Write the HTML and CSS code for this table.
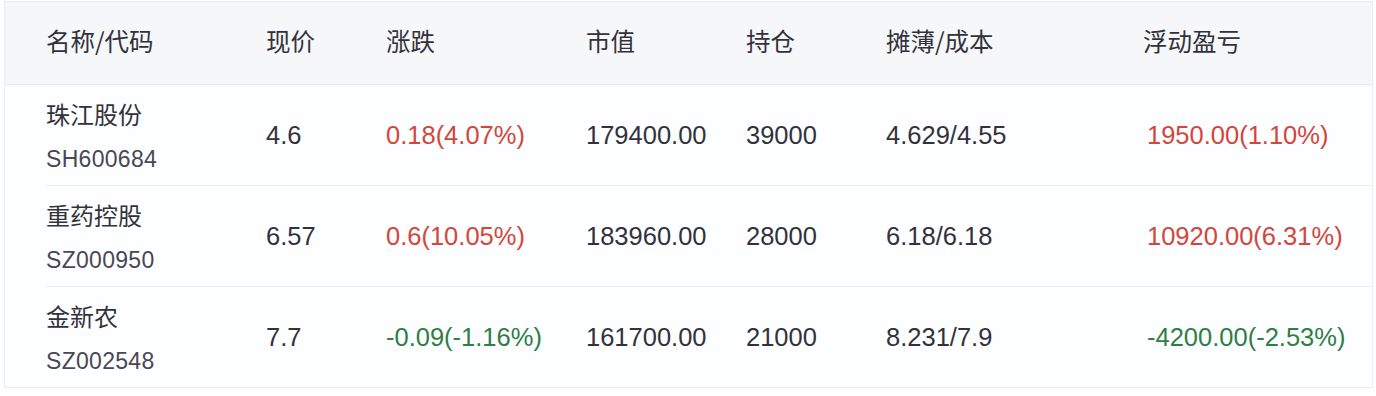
FILE: index.html
```html
<!DOCTYPE html>
<html lang="zh">
<head>
<meta charset="utf-8">
<link rel="stylesheet" href="styles.css">
</head>
<body>
<div class="table">
  <div class="head">
    <div class="cell">名称/代码</div>
    <div class="cell">现价</div>
    <div class="cell">涨跌</div>
    <div class="cell">市值</div>
    <div class="cell">持仓</div>
    <div class="cell">摊薄/成本</div>
    <div class="cell">浮动盈亏</div>
  </div>
  <div class="row">
    <div class="cell name"><span class="cn">珠江股份</span><span class="code">SH600684</span></div>
    <div class="cell num">4.6</div>
    <div class="cell num up">0.18(4.07%)</div>
    <div class="cell num">179400.00</div>
    <div class="cell num">39000</div>
    <div class="cell num">4.629/4.55</div>
    <div class="cell num up pl">1950.00(1.10%)</div>
  </div>
  <div class="row">
    <div class="cell name"><span class="cn">重药控股</span><span class="code">SZ000950</span></div>
    <div class="cell num">6.57</div>
    <div class="cell num up">0.6(10.05%)</div>
    <div class="cell num">183960.00</div>
    <div class="cell num">28000</div>
    <div class="cell num">6.18/6.18</div>
    <div class="cell num up pl">10920.00(6.31%)</div>
  </div>
  <div class="row last">
    <div class="cell name"><span class="cn">金新农</span><span class="code">SZ002548</span></div>
    <div class="cell num">7.7</div>
    <div class="cell num down">-0.09(-1.16%)</div>
    <div class="cell num">161700.00</div>
    <div class="cell num">21000</div>
    <div class="cell num">8.231/7.9</div>
    <div class="cell num down pl">-4200.00(-2.53%)</div>
  </div>
</div>
</body>
</html>
```
FILE: styles.css
```css
* { box-sizing: border-box; }
html, body { margin: 0; padding: 0; background: #ffffff; }
body {
  font-family: "Liberation Sans", "Noto Sans CJK SC", sans-serif;
  color: #2f2e38;
}
.table {
  margin: 1px 0 0 4px;
  width: 1369px;
  border: 1px solid #e9ecf1;
  background: #fdfeff;
}
.head, .row {
  display: grid;
  grid-template-columns: 220px 120px 200px 160px 140px 257px 1fr;
  align-items: center;
}
.head {
  height: 83px;
  padding-left: 41px;
  background: #f6f7f9;
  border-bottom: 1px solid #e6e9ee;
  font-family: "Noto Sans CJK SC", sans-serif;
  font-size: 24.5px;
  color: #33323c;
}
.head .cell { padding-bottom: 6px; }
.row {
  height: 101px;
  margin-left: 41px;
  border-bottom: 1px solid #e9ecf1;
}
.row.last { border-bottom: none; height: 100px; }
.name {
  display: flex;
  flex-direction: column;
  gap: 15px;
  padding-bottom: 1px;
}
.cn {
  font-family: "Noto Sans CJK SC", sans-serif;
  font-size: 24px;
  line-height: 34px;
  color: #33323c;
}
.code {
  font-size: 23px;
  line-height: 26px;
  color: #4a4852;
  letter-spacing: 0.3px;
}
.num {
  font-size: 25.5px;
  padding-top: 0;
  color: #33323c;
}
.num.pl { padding-left: 4px; }
.num.up { color: #d3463b; }
.num.down { color: #2f7f45; }
```
